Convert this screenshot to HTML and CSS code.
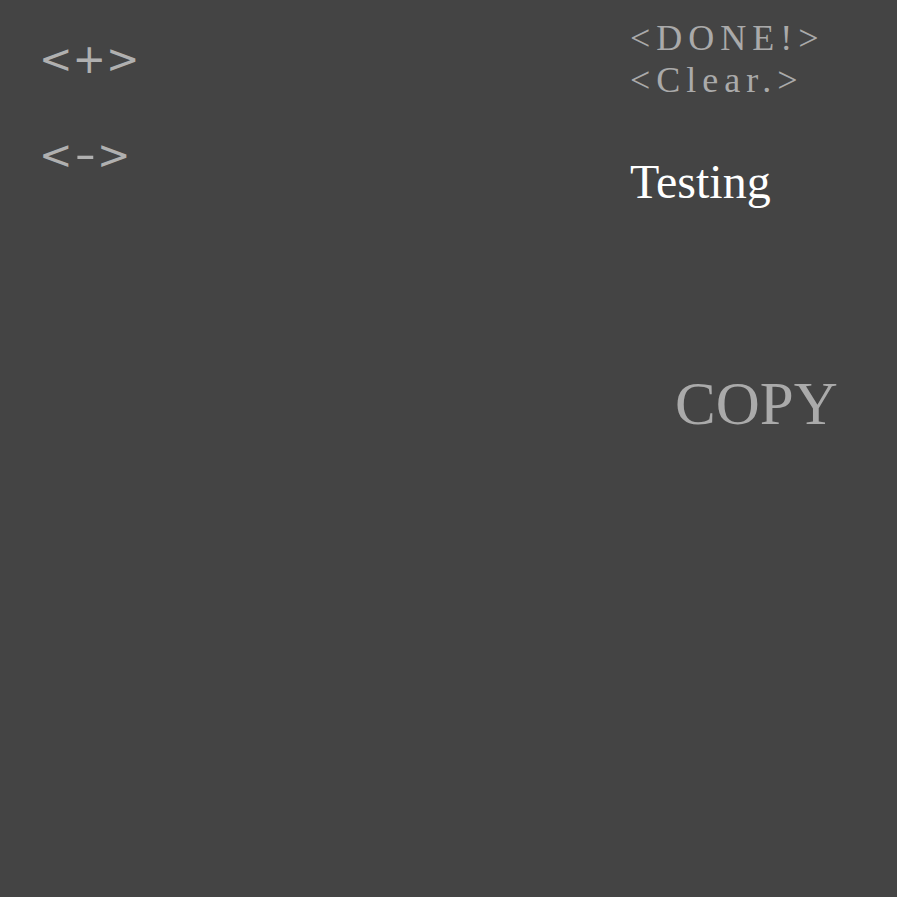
FILE: index.html
```html
<!DOCTYPE html>
<html>
<head>
<meta charset="utf-8">
<link rel="stylesheet" href="styles.css">
</head>
<body>
<div class="page">
  <div class="left">
    <div class="btn plus">&lt;+&gt;</div>
    <div class="btn minus">&lt;<span class="dash">-</span>&gt;</div>
  </div>
  <div class="right">
    <div class="cmd done">&lt;DONE!&gt;</div>
    <div class="cmd clear">&lt;Clear.&gt;</div>
    <div class="testing">Testing</div>
    <div class="copy">COPY</div>
  </div>
</div>
</body>
</html>
```
FILE: styles.css
```css
html, body {
  margin: 0;
  padding: 0;
  background: #444444;
  height: 100%;
}
.page {
  display: flex;
  padding: 0 0 0 39px;
}
.left {
  width: 591px;
  display: flex;
  flex-direction: column;
  padding-top: 34px;
  gap: 46px;
}
.btn {
  font-family: "DejaVu Sans", sans-serif;
  font-size: 40px;
  line-height: 50px;
  color: #b0b0b0;
}
.dash {
  display: inline-block;
  transform: scaleX(1.5);
  margin: 0 5px;
}
.right {
  display: flex;
  flex-direction: column;
  padding-top: 17px;
}
.cmd {
  font-family: "Liberation Serif", serif;
  font-size: 36px;
  line-height: 42px;
  letter-spacing: 6px;
  color: #aaaaaa;
}
.testing {
  font-family: "Liberation Serif", serif;
  font-size: 48px;
  line-height: 50px;
  color: #ffffff;
  margin-top: 56px;
}
.copy {
  font-family: "Liberation Serif", serif;
  font-size: 61px;
  line-height: 70px;
  color: #aaaaaa;
  margin-top: 162px;
  margin-left: 45px;
}
```
